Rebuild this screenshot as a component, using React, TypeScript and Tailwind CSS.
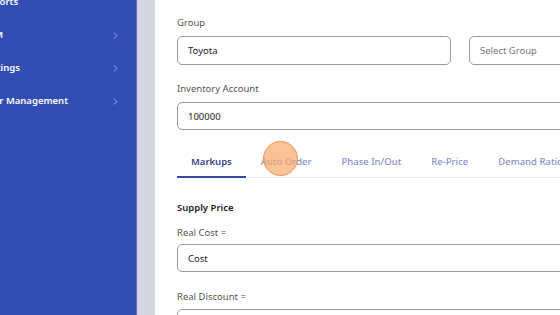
import { ChevronRight } from "lucide-react";

const navItems = [
  { label: "Reports", arrow: false },
  { label: "CRM", arrow: true },
  { label: "Settings", arrow: true },
  { label: "User Management", arrow: true },
];

const tabs = ["Markups", "Auto Order", "Phase In/Out", "Re-Price", "Demand Ratio"];

export default function App() {
  return (
    <div
      className="flex h-[315px] w-[560px] overflow-hidden bg-white"
      style={{ fontFamily: '"Noto Sans", "Open Sans", sans-serif' }}
    >
      {/* sidebar */}
      <aside className="w-[137px] shrink-0 bg-[#324db4] border-r border-[#5a6fc6]">
        <ul className="-mt-[14px] flex flex-col">
          {navItems.map((item) => (
            <li key={item.label} className="flex h-[33px] items-center pr-[15px]">
              <span className="-ml-[18px] flex-1 whitespace-nowrap text-[9.5px] font-semibold text-white">
                {item.label}
              </span>
              {item.arrow && <ChevronRight className="h-[11px] w-[11px] text-[#a9b5e6]" strokeWidth={2} />}
            </li>
          ))}
        </ul>
      </aside>

      <div className="w-[18px] shrink-0 bg-[#d6d6e2]" />

      {/* content */}
      <main className="flex-1 pl-[22px] text-[9.5px] leading-[15px] text-[#555]">
        <div className="mt-[15px]">Group</div>
        <div className="mt-[6px] flex gap-[18px]">
          <div className="flex h-[29px] w-[274px] items-center rounded-[5px] border border-[#9a9a9a] px-[10px] text-[#222]">
            Toyota
          </div>
          <div className="flex h-[29px] flex-1 -mr-[20px] items-center rounded-[5px] border border-[#9a9a9a] px-[10px] text-[#777]">
            Select Group
          </div>
        </div>

        <div className="mt-[16px]">Inventory Account</div>
        <div className="mt-[6px] -mr-[20px] flex h-[28px] items-center rounded-[5px] border border-[#9a9a9a] px-[10px] text-[#222]">
          100000
        </div>

        {/* tabs */}
        <div className="relative mt-[16px] -mr-[40px] flex border-b border-[#ececf2]">
          {tabs.map((t, i) => (
            <div
              key={t}
              className={
                i === 0
                  ? "-mb-px border-b-2 border-[#3347a5] px-[14px] pb-[7px] pt-[8px] font-semibold text-[#32418f] whitespace-nowrap"
                  : "px-[15px] pb-[8px] pt-[8px] font-medium text-[#8790c9] whitespace-nowrap"
              }
            >
              {t}
            </div>
          ))}
          <div className="absolute left-[86px] -top-[5px] h-[35px] w-[35px] rounded-full border border-[#f0955a] bg-[#f8a868]/70" />
        </div>

        <div className="mt-[22px] font-semibold text-[#222]">Supply Price</div>
        <div className="mt-[10px]">Real Cost =</div>
        <div className="mt-[4px] -mr-[20px] flex h-[28px] items-center rounded-[5px] border border-[#9a9a9a] px-[10px] text-[#222]">
          Cost
        </div>
        <div className="mt-[17px]">Real Discount =</div>
        <div className="mt-[5px] -mr-[20px] h-[28px] rounded-[5px] border border-[#9a9a9a]" />
      </main>
    </div>
  );
}
